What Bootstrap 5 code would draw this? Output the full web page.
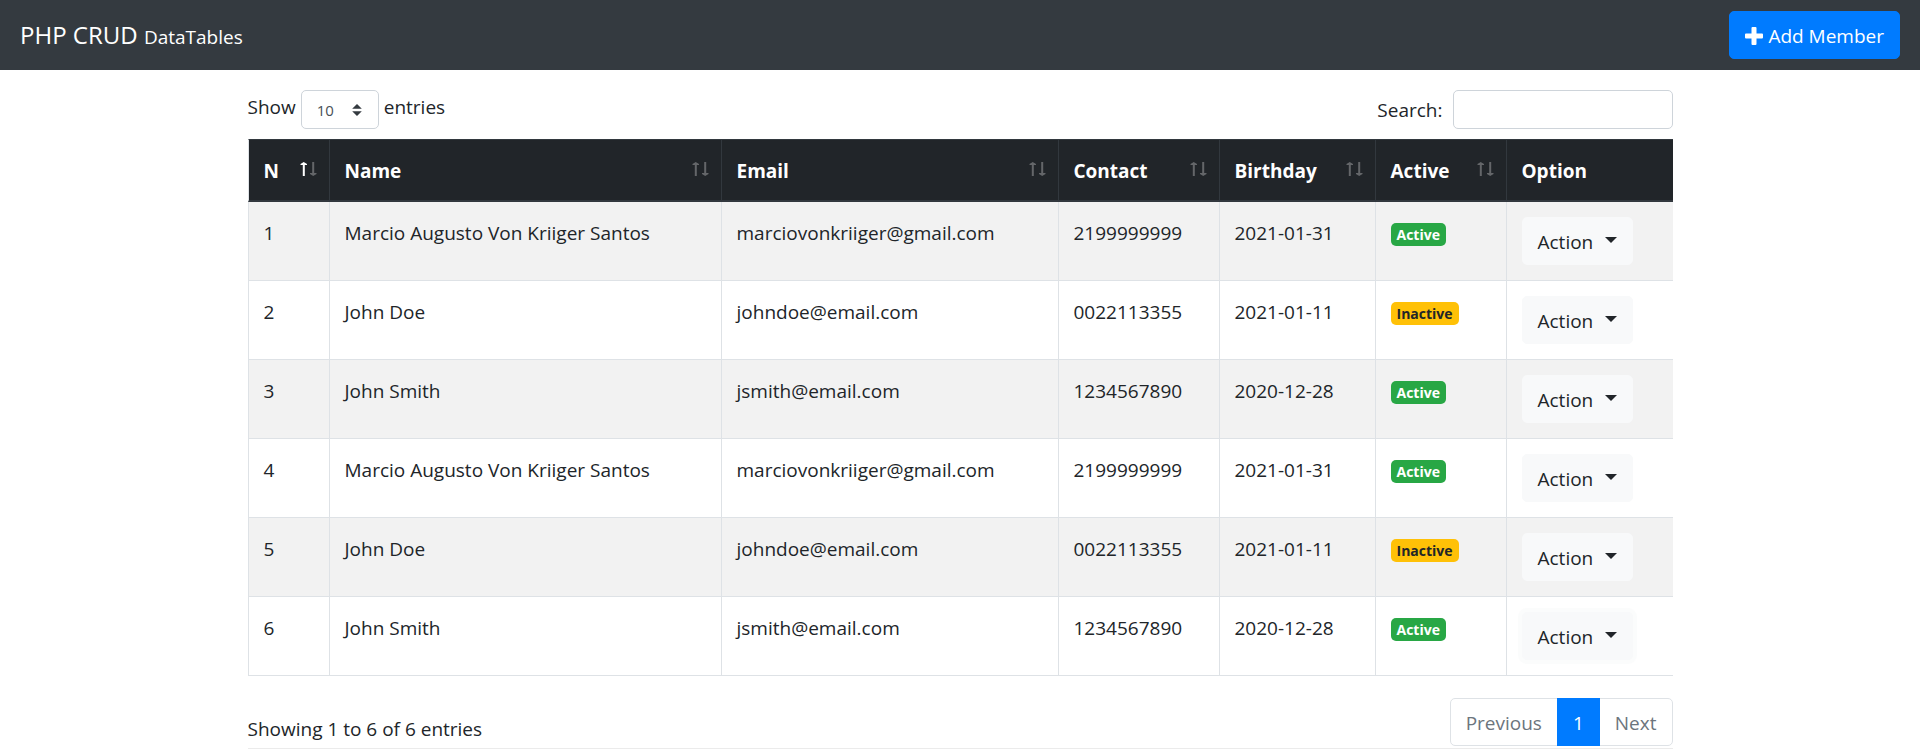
<!DOCTYPE html>
<html lang="en">
<head>
<meta charset="utf-8">
<meta name="viewport" content="width=device-width, initial-scale=1">
<title>PHP CRUD DataTables</title>
<link href="https://cdn.jsdelivr.net/npm/bootstrap@5.3.0/dist/css/bootstrap.min.css" rel="stylesheet">
<style>
  html { font-size: 20px; }
  body { font-family: "Open Sans", "Noto Sans", sans-serif; font-size: 19px; line-height: 30px; color: #212529; background: #fff; }
  .topbar { background: #343a40; padding: 11px 20px; }
  .topbar .navbar-brand { font-size: 24px; line-height: 38px; padding: 2px 0 0; }
  .topbar .navbar-brand small { font-size: 19px; }
  .btn { font-size: 19px; line-height: 30px; padding: 9px 15px 7px; border-radius: 5px; }
  .btn-primary { --bs-btn-bg: #007bff; --bs-btn-border-color: #007bff; }
  .btn-light { --bs-btn-color: #212529; --bs-btn-bg: #f8f9fa; --bs-btn-border-color: #f8f9fa; }
  .btn-light.focused { box-shadow: 0 0 0 4px rgba(248, 249, 250, .5); }
  .btn-light.dropdown-toggle::after { border-width: 6px 6px 0; margin-left: 7px; vertical-align: 6px; }
  .members { max-width: 1425px; }
  .length-label { padding-top: 2px; }
  .length-select { width: 78px; height: 39px; font-size: 15px; line-height: 24px; color: #495057; padding: 6px 15px; border: 1px solid #ced4da; border-radius: 5px;
    background-image: url("data:image/svg+xml,%3csvg xmlns='http://www.w3.org/2000/svg' viewBox='0 0 4 5'%3e%3cpath fill='%23343a40' d='M2 0L0 2h4zm0 5L0 3h4z'/%3e%3c/svg%3e");
    background-size: 10px 12px; background-position: right 16px center; }
  .search-box { width: 220px; height: 39px; font-size: 16px; border: 1px solid #ced4da; border-radius: 5px; }
  .data-grid { table-layout: fixed; border-collapse: separate; border-spacing: 0; color: #212529; }
  .data-grid th, .data-grid td { padding: 16px 15px 14px; border-left: 1px solid #dee2e6; vertical-align: top; }
  .data-grid td { border-bottom: 1px solid #dee2e6; }
  .data-grid td:last-child { padding: 15px; }
  .data-grid th { background: #212529; color: #fff; border-top: 1px solid #32383e; border-bottom: 2px solid #32383e; font-weight: 700; }
  .data-grid th + th { border-left-color: #32383e; }
  .data-grid tbody tr:nth-child(odd) { background: #f2f2f2; }
  .c-n { width: 81px; } .c-name { width: 392px; } .c-email { width: 337px; } .c-contact { width: 161px; }
  .c-birth { width: 156px; } .c-active { width: 131px; } .c-option { width: 167px; }
  .sort { width: 17px; height: 14px; margin: 6px -3px 0 0; flex: none; fill: #fff; }
  .sort path { opacity: .3; }
  .sort .on { opacity: 1; }
  .badge { font-size: 14px; line-height: 15px; padding: 4px 6px; border-radius: 5px; font-weight: 700; }
  .b-on { background: #28a745; color: #fff; }
  .b-off { background: #ffc107; color: #212529; }
  .info-row { padding: 22px 0 2px; }
  .info { padding-top: 16px; }
  .pagination { --bs-pagination-font-size: 19px; --bs-pagination-padding-x: 15px; --bs-pagination-color: #6c757d; --bs-pagination-disabled-color: #6c757d; --bs-pagination-disabled-bg: #fff; --bs-pagination-border-color: #dee2e6; --bs-pagination-disabled-border-color: #dee2e6; --bs-pagination-active-bg: #007bff; --bs-pagination-active-border-color: #007bff; --bs-pagination-border-radius: 5px; }
  .pagination .page-link { padding: 9px 15px 7px; }
  .endline { border-top: 1px solid #ebebeb; }
</style>
</head>
<body>
<svg class="d-none" xmlns="http://www.w3.org/2000/svg">
  <symbol id="plus" viewBox="0 0 18 18"><path d="M7.500 0h3q1 0 1 1v5.500h5.500q1 0 1 1v3q0 1-1 1h-5.500v5.500q0 1-1 1h-3q-1 0-1-1v-5.500H1q-1 0-1-1v-3q0-1 1-1h5.500V1q0-1 1-1z"/></symbol>
</svg>
<nav class="navbar topbar">
  <a class="navbar-brand text-white m-0" href="#">PHP CRUD <small>DataTables</small></a>
  <button class="btn btn-primary d-flex align-items-center gap-1" type="button"><svg width="18" height="18" fill="#fff" aria-hidden="true"><use href="#plus"/></svg>Add Member</button>
</nav>
<main class="members mx-auto">
  <div class="d-flex justify-content-between pt-3 pb-2">
    <div class="d-flex gap-1">
      <label class="length-label" for="len">Show</label>
      <select id="len" class="form-select length-select"><option>10</option><option>25</option><option>50</option></select>
      <label class="length-label" for="len">entries</label>
    </div>
    <div class="d-flex align-items-center gap-2">
      <label for="search">Search:</label>
      <input id="search" type="search" class="form-control search-box">
    </div>
  </div>
  <table class="data-grid w-100">
    <colgroup><col class="c-n"><col class="c-name"><col class="c-email"><col class="c-contact"><col class="c-birth"><col class="c-active"><col class="c-option"></colgroup>
    <thead><tr id="head"></tr></thead>
    <tbody id="rows"></tbody>
  </table>
  <div class="d-flex justify-content-between info-row">
    <div class="info">Showing 1 to 6 of 6 entries</div>
    <ul class="pagination mb-0">
      <li class="page-item disabled"><a class="page-link" href="#">Previous</a></li>
      <li class="page-item active"><a class="page-link" href="#">1</a></li>
      <li class="page-item disabled"><a class="page-link" href="#">Next</a></li>
    </ul>
  </div>
  <div class="endline"></div>
</main>
<script>
  const heads = ["N", "Name", "Email", "Contact", "Birthday", "Active", "Option"];
  document.getElementById("head").innerHTML = heads.map((h, i) => `<th scope="col"><div class="d-flex justify-content-between"><span>${h}</span>${i < 6 ? `<svg class="sort me-0" viewBox="0 0 17 14" aria-hidden="true"><path class="${i ? "" : "on"}" d="M2.800 14V3H0.500V2L3.700 0 7 2V3H4.800V14z"/><path d="M12.200 0V11H10V12L13.200 14 16.500 12V11H14.200V0z"/></svg>` : ""}</div></th>`).join("").replaceAll(" me-0", "");
  const people = [
    ["Marcio Augusto Von Kriiger Santos", "marciovonkriiger@gmail.com", "2199999999", "2021-01-31", true],
    ["John Doe", "johndoe@email.com", "0022113355", "2021-01-11", false],
    ["John Smith", "jsmith@email.com", "1234567890", "2020-12-28", true]
  ];
  document.getElementById("rows").innerHTML = [...people, ...people].map((p, i) => `<tr><td>${i + 1}</td><td>${p[0]}</td><td>${p[1]}</td><td>${p[2]}</td><td>${p[3]}</td><td><span class="badge ${p[4] ? "b-on" : "b-off"}">${p[4] ? "Active" : "Inactive"}</span></td><td><div class="d-flex"><button type="button" class="btn btn-light dropdown-toggle${i === 5 ? " focused" : ""}" data-bs-toggle="dropdown">Action </button></div></td></tr>`).join("");
</script>
<script src="https://cdn.jsdelivr.net/npm/bootstrap@5.3.0/dist/js/bootstrap.bundle.min.js"></script>
</body>
</html>
